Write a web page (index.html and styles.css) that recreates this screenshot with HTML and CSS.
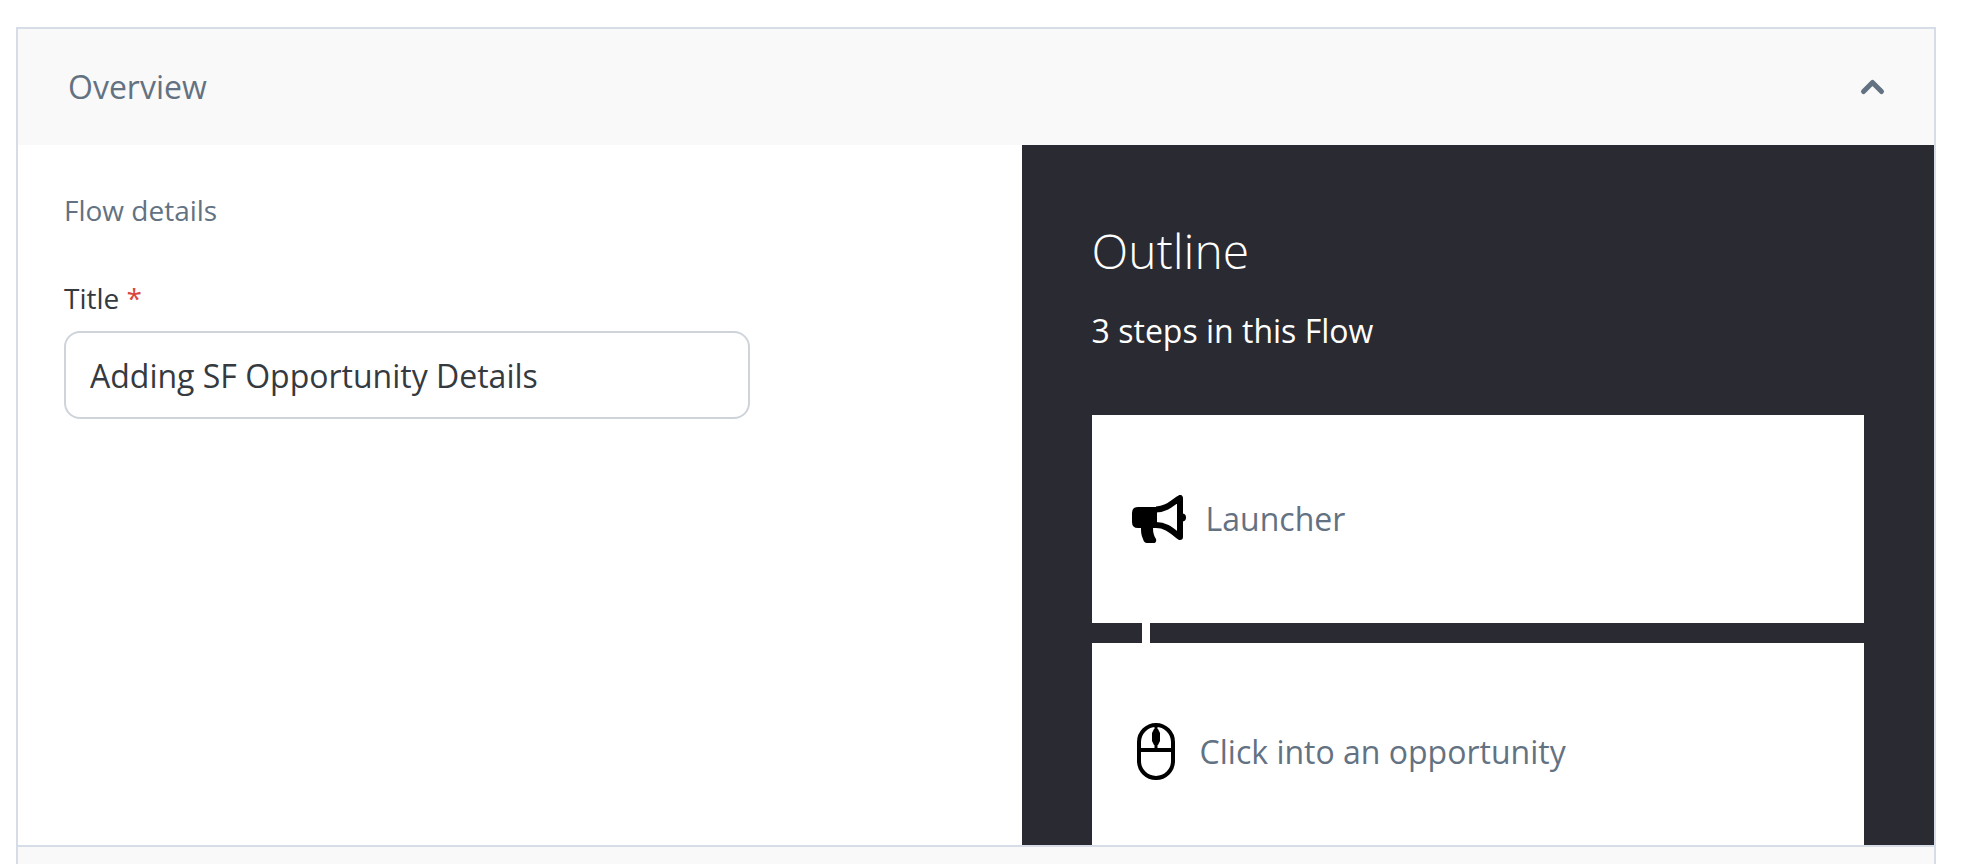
FILE: index.html
```
<!DOCTYPE html>
<html lang="en">
  <head>
    <meta charset="utf-8">
    <title>Flow overview</title>
    <meta name="viewport" content="width=device-width,initial-scale=1">
    <link rel="stylesheet" href="styles.css">
  </head>
  <body>
    <main class="accordion">
      <button type="button" class="panel-header" aria-expanded="true" aria-controls="overview">
        <span>Overview</span>
        <svg class="chevron" viewBox="0 0 24 16" aria-hidden="true">
          <path d="M3.5 12.5 L12.5 3.5 L21.5 12.5"/>
        </svg>
      </button>
      <div class="panel-body" id="overview">
        <form class="details">
          <h2 class="details-heading">Flow details</h2>
          <label class="field-label" for="title">Title <span class="required">*</span></label>
          <input class="field-input" type="text" id="title" name="title" value="Adding SF Opportunity Details" required>
        </form>
        <section class="outline">
          <h1 class="outline-title">Outline</h1>
          <p class="outline-count">3 steps in this Flow</p>
          <ol class="steps">
            <li class="step">
              <svg class="icon-launcher" viewBox="0 0 54 48" aria-hidden="true">
                <path d="M6 12 H25 V33 H21 C21 38 22 41 24 44 Q25 48 21 48 H15 Q12 48 11 44 C9 40 9 36 9 33 H6 Q0 33 0 27 V18 Q0 12 6 12 Z"/>
                <path class="horn" d="M24 14.5 C35 14.5 41 7 48 3 V42 C41 37 35 30 24 30"/>
                <circle cx="50" cy="22.5" r="4"/>
              </svg>
              <span>Launcher</span>
            </li>
            <li class="step">
              <svg class="icon-mouse" viewBox="0 0 38 58" aria-hidden="true">
                <rect class="line" x="2" y="2" width="34" height="53" rx="17"/>
                <path class="line" d="M2 27 H36"/>
                <path class="cord" d="M19 2 V27"/>
                <path d="M17 6 H21 L23 10 V18 L21 22 H17 L15 18 V10 Z"/>
              </svg>
              <span>Click into an opportunity</span>
            </li>
          </ol>
        </section>
      </div>
      <div class="panel-next"></div>
    </main>
  </body>
</html>
```

FILE: styles.css
```
* {
  box-sizing: border-box;
}
body {
  margin: 0;
  background: white;
  color: #343a40;
  font-family: "Open Sans", "Noto Sans", sans-serif;
  font-size: 32px;
}
h1, h2, p, ol {
  margin: 0;
  padding: 0;
}

/* accordion fills the window, the open panel takes what is left */
.accordion {
  display: flex;
  flex-direction: column;
  height: 100vh;
  padding: 27px 30px 0 16px;
}
.panel-header {
  display: flex;
  flex: none;
  align-items: center;
  justify-content: space-between;
  padding: 36px 50px;
  border: 2px solid #d6dde6;
  border-bottom: none;
  background: #f9f9f9;
  color: #637282;
  font: inherit;
  line-height: 44px;
  text-align: left;
  cursor: pointer;
}
.chevron {
  width: 24px;
  height: 16px;
  overflow: visible;
  fill: none;
  stroke: #637282;
  stroke-width: 5;
  stroke-linecap: round;
  stroke-linejoin: round;
}
.panel-body {
  display: grid;
  grid-template-columns: 11fr 10fr;
  flex: 1;
  min-height: 0;
  overflow: hidden;
  border: 2px solid #d6dde6;
  border-top: none;
}
.panel-next {
  flex: none;
  height: 17px;
  border: 2px solid #d6dde6;
  border-width: 0 2px;
  background: #f9f9f9;
}

.details {
  padding: 45px 46px;
  font-size: 28px;
  line-height: 40px;
}
.details-heading {
  margin-bottom: 48px;
  color: #637282;
  font-size: 28px;
  font-weight: 400;
}
.field-label {
  display: block;
  margin-bottom: 13px;
}
.required {
  color: #d9453d;
}
.field-input {
  display: block;
  width: 100%;
  max-width: 686px;
  height: 88px;
  padding: 0 24px;
  border: 2px solid #ced4da;
  border-radius: 16px;
  background: white;
  color: #343a40;
  font: inherit;
  font-size: 32px;
}

.outline {
  padding: 70px;
  background: #2a2a33;
  color: white;
}
.outline-title {
  margin-bottom: 22px;
  font-size: 48px;
  font-weight: 300;
  line-height: 72px;
}
.outline-count {
  margin-bottom: 62px;
  font-weight: 500;
  line-height: 44px;
}
.steps {
  display: grid;
  gap: 20px;
  list-style: none;
}
.step {
  position: relative;
  display: flex;
  align-items: center;
  gap: 20px;
  padding: 80px 40px;
  background: white;
  color: #637282;
  line-height: 44px;
}
/* link between two steps */
.step + .step::before {
  content: "";
  position: absolute;
  top: -20px;
  left: 50px;
  width: 8px;
  height: 20px;
  background: white;
}
.icon-launcher {
  width: 54px;
  height: 48px;
}
.icon-launcher .horn {
  fill: none;
  stroke: black;
  stroke-width: 6;
  stroke-linejoin: round;
}
.icon-mouse {
  width: 48px;
  height: 58px;
}
.icon-mouse .line {
  fill: none;
  stroke: black;
  stroke-width: 4;
}
.icon-mouse .cord {
  fill: none;
  stroke: black;
  stroke-width: 3;
}
```
